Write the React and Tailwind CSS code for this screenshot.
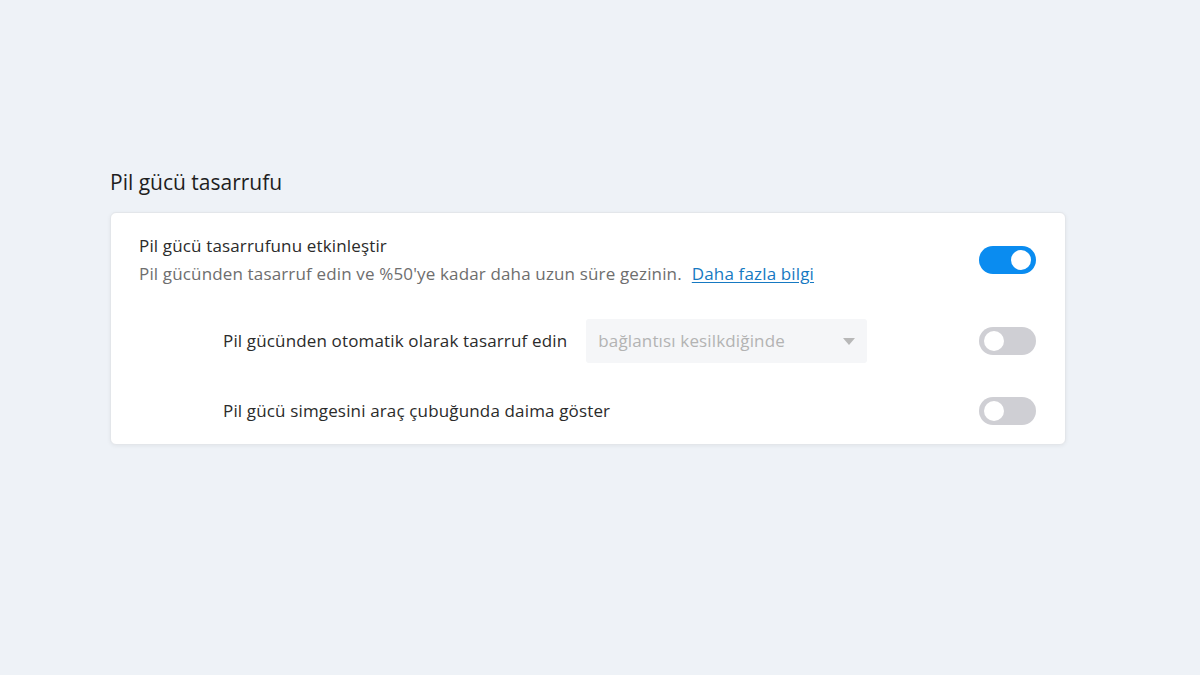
import { useState } from 'react';

const Toggle = ({ on, onChange }) => (
  <button
    onClick={onChange}
    className={`relative w-[57px] h-[28px] rounded-full shrink-0 transition-colors ${
      on ? 'bg-[#0a8cf0]' : 'bg-[#cfcfd4]'
    }`}
  >
    <span
      className={`absolute top-[4px] w-[20px] h-[20px] rounded-full bg-white transition-all ${
        on ? 'left-[32px]' : 'left-[5px]'
      }`}
    />
  </button>
);

export default function App() {
  const [saver, setSaver] = useState(true);
  const [auto, setAuto] = useState(false);
  const [icon, setIcon] = useState(false);

  return (
    <div
      className="min-h-[675px] w-full bg-[#eef2f7] pt-[167px] pl-[110px]"
      style={{ fontFamily: '"Open Sans", "Noto Sans", sans-serif' }}
    >
      <div className="w-[956px]">
        <h2 className="text-[21px] font-medium text-[#1e1e1e] leading-[30px] mb-[15px]">
          Pil gücü tasarrufu
        </h2>

        <div className="bg-white rounded-[6px] border border-[#e3e6ea] shadow-[0_1px_4px_rgba(0,0,0,0.06)] pt-[19px] pb-[19px] pl-[28px] pr-[29px] tracking-[0.15px]">
          {/* Main row */}
          <div className="flex items-center justify-between">
            <div>
              <div className="text-[17px] text-[#2b2b2b] leading-[28px]">
                Pil gücü tasarrufunu etkinleştir
              </div>
              <div className="text-[17px] text-[#6e6e6e] leading-[28px]">
                Pil gücünden tasarruf edin ve %50'ye kadar daha uzun süre gezinin.
                <a href="#" className="ml-[10px] text-[#1679c2] underline underline-offset-2">
                  Daha fazla bilgi
                </a>
              </div>
            </div>
            <Toggle on={saver} onChange={() => setSaver(!saver)} />
          </div>

          {/* Auto row */}
          <div className="flex items-center justify-between mt-[31px] pl-[84px]">
            <div className="flex items-center gap-[19px]">
              <span className="text-[17px] text-[#2b2b2b]">
                Pil gücünden otomatik olarak tasarruf edin
              </span>
              <div className="w-[281px] h-[44px] bg-[#f5f6f8] rounded-[3px] flex items-center justify-between pl-[12px] pr-[12px]">
                <span className="text-[17px] text-[#b3b3b3]">bağlantısı kesilkdiğinde</span>
                <svg width="12" height="7" viewBox="0 0 12 7">
                  <path d="M0 0 L12 0 L6 7 Z" fill="#b8b8b8" />
                </svg>
              </div>
            </div>
            <Toggle on={auto} onChange={() => setAuto(!auto)} />
          </div>

          {/* Icon row */}
          <div className="flex items-center justify-between mt-[34px] pl-[84px]">
            <span className="text-[17px] text-[#2b2b2b]">
              Pil gücü simgesini araç çubuğunda daima göster
            </span>
            <Toggle on={icon} onChange={() => setIcon(!icon)} />
          </div>
        </div>
      </div>
    </div>
  );
}
